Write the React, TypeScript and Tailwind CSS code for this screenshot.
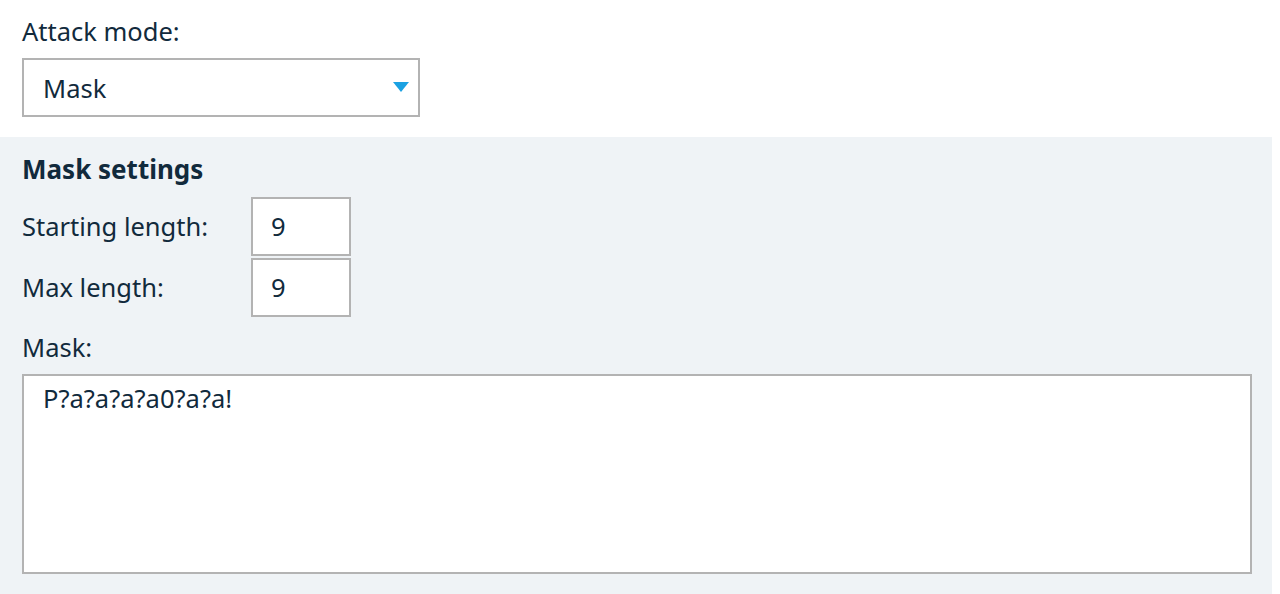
export default function App() {
  return (
    <div className="w-[1280px] h-[594px] overflow-hidden bg-white text-[#112a3c] font-['Noto_Sans',sans-serif] text-[25.5px] leading-none">
      <div className="pl-[22px] pt-[14px] pb-[20px]">
        <div className="h-[36px] flex items-center">Attack mode:</div>
        <div className="mt-[8px] w-[398px] h-[59px] border-2 border-[#b3b3b3] flex items-center justify-between pl-[19px] pr-[9px] pt-[3px] bg-white">
          <span>Mask</span>
          <svg width="16" height="11" viewBox="0 0 16 11" className="-mt-[3px]">
            <polygon points="0,0 16,0 8,10" fill="#1ba1e2" />
          </svg>
        </div>
      </div>
      <div className="bg-[#eff3f6] w-[1272px] h-[457px] pl-[22px] pt-[14px]">
        <div className="h-[36px] flex items-center font-bold text-[26px]">Mask settings</div>
        <div className="mt-[10px] flex flex-col gap-[2px]">
          <div className="flex items-center">
            <span className="w-[229px]">Starting length:</span>
            <div className="w-[100px] h-[59px] border-2 border-[#b3b3b3] bg-white flex items-center pl-[18px]">9</div>
          </div>
          <div className="flex items-center">
            <span className="w-[229px]">Max length:</span>
            <div className="w-[100px] h-[59px] border-2 border-[#b3b3b3] bg-white flex items-center pl-[18px]">9</div>
          </div>
        </div>
        <div className="mt-[13px] h-[36px] flex items-center">Mask:</div>
        <div className="mt-[8px] w-[1230px] h-[200px] border-2 border-[#b3b3b3] bg-white pl-[19px] pt-[10px]">
          P?a?a?a?a0?a?a!
        </div>
      </div>
    </div>
  );
}
